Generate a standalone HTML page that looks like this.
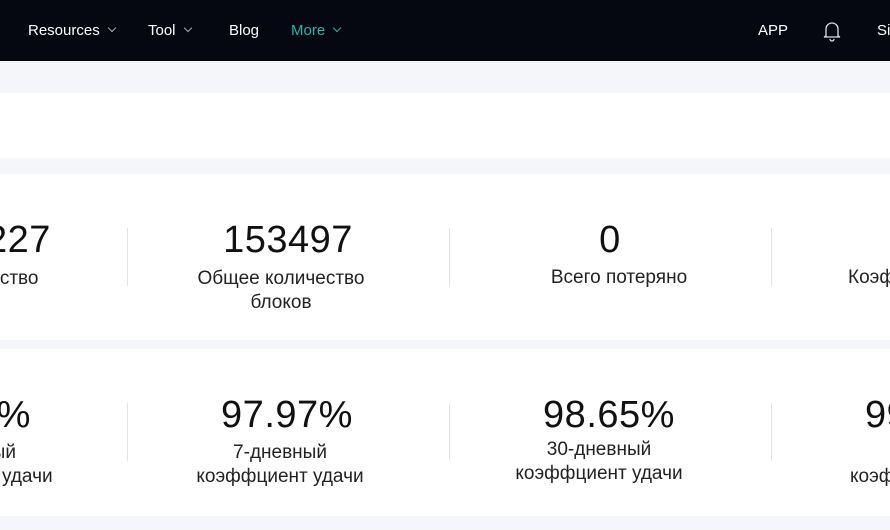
<!DOCTYPE html>
<html><head><meta charset="utf-8"><style>
*{margin:0;padding:0;box-sizing:border-box}
body{width:890px;height:530px;overflow:hidden;background:#f5f6f9;font-family:"Liberation Sans",Arial,sans-serif;position:relative}
.nav{position:absolute;left:0;top:0;width:890px;height:61px;background:#050810;color:#fff;font-size:15px;overflow:hidden}
.nav span{position:absolute;top:22px;white-space:nowrap}
.chev{display:inline-block;width:6px;height:6px;border-right:1px solid #aaa;border-bottom:1px solid #aaa;transform:rotate(45deg);margin-left:9px;position:relative;top:-4px}
.w{position:absolute;left:0;width:890px;background:#fff}
.n{position:absolute;width:400px;text-align:center;font-size:38px;line-height:38px;color:#111;letter-spacing:0.5px}
.l{position:absolute;width:400px;text-align:center;font-size:19px;line-height:24px;color:#222;white-space:nowrap}
.d{position:absolute;width:1px;background:#e3e3e6}
.clip{position:absolute;left:0;top:0;width:890px;height:530px;overflow:hidden}
</style></head><body>
<div class="nav">
<span style="left:28px">Resources<i class="chev"></i></span>
<span style="left:148px">Tool<i class="chev"></i></span>
<span style="left:229px">Blog</span>
<span style="left:291px;color:#2bb3a8">More<i class="chev" style="border-color:#2bb3a8"></i></span>
<span style="left:758px">APP</span>
<svg style="position:absolute;left:822px;top:20px" width="20" height="22" viewBox="0 0 20 22" fill="none" stroke="#ddd" stroke-width="1.3"><path d="M4 16V9a6 6 0 0112 0v7l2 1H2l2-1z"/><path d="M8 19a2 2 0 004 0"/></svg>
<span style="left:877px">Si</span>
</div>
<div class="w" style="top:93px;height:65px"></div>
<div class="w" style="top:174px;height:166px"></div>
<div class="w" style="top:349px;height:167px"></div>
<div class="clip">
<div class="d" style="left:127px;top:228px;height:58px"></div>
<div class="d" style="left:449px;top:228px;height:58px"></div>
<div class="d" style="left:771px;top:228px;height:58px"></div>
<div class="d" style="left:127px;top:403px;height:58px"></div>
<div class="d" style="left:449px;top:403px;height:58px"></div>
<div class="d" style="left:771px;top:403px;height:58px"></div>

<div class="n" style="left:-214px;top:221px">105227</div>
<div class="l" style="left:-245px;top:267px">Общее количество</div>
<div class="n" style="left:88px;top:221px">153497</div>
<div class="l" style="left:81px;top:267px">Общее количество<br>блоков</div>
<div class="n" style="left:410px;top:221px">0</div>
<div class="l" style="left:419px;top:266px">Всего потеряно</div>
<div class="l" style="left:848px;top:266px;text-align:left">Коэффициент удачи</div>

<div class="n" style="left:-235px;top:396px">98.00%</div>
<div class="l" style="left:-231px;top:441px">1-дневный<br>коэффциент удачи</div>
<div class="n" style="left:87px;top:396px">97.97%</div>
<div class="l" style="left:80px;top:441px">7-дневный<br>коэффциент удачи</div>
<div class="n" style="left:409px;top:396px">98.65%</div>
<div class="l" style="left:399px;top:438px">30-дневный<br>коэффциент удачи</div>
<div class="n" style="left:865px;top:396px;text-align:left;width:200px">99.00%</div>
<div class="l" style="left:850px;top:465px;text-align:left;width:200px">коэффциент удачи</div>
</div>
</body></html>
